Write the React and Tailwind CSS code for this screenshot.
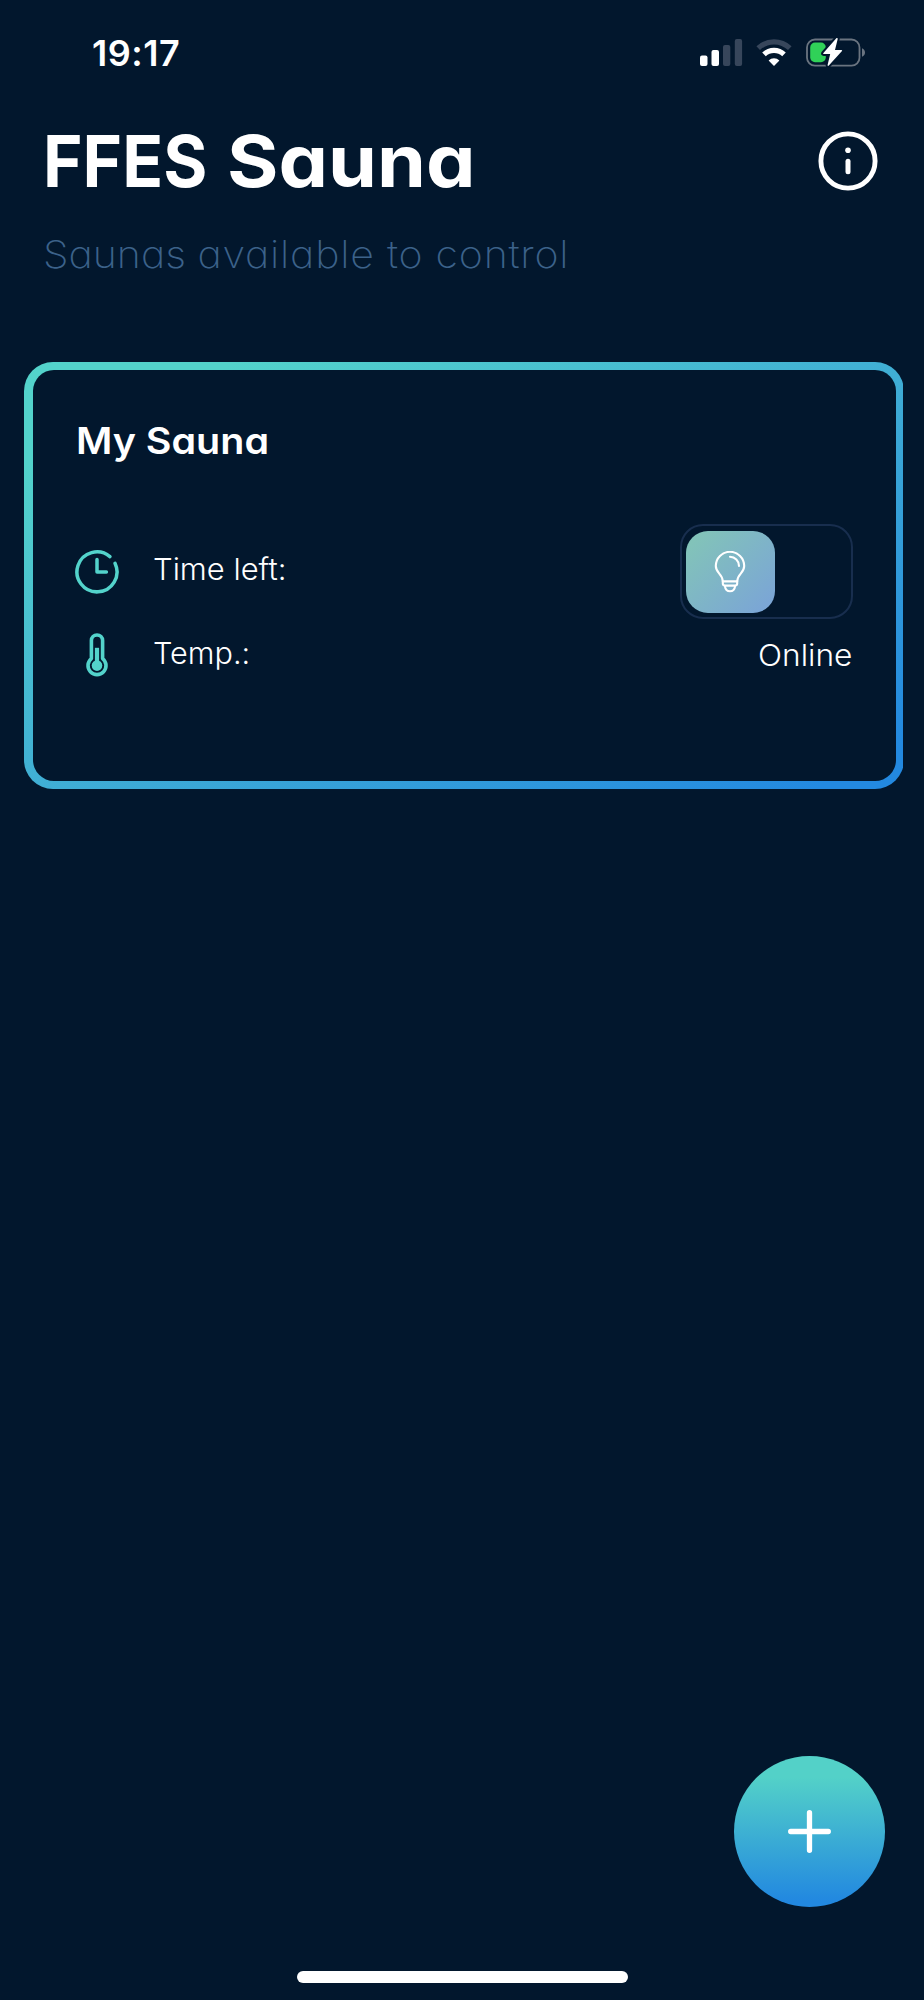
import React from "react";

function SignalIcon() {
  return (
    <svg width="43" height="28" viewBox="0 0 43 28">
      <rect x="0" y="16.5" width="7.5" height="10.5" rx="2" fill="#fff" />
      <rect x="11.5" y="11" width="7.5" height="16" rx="2" fill="#fff" />
      <rect x="23" y="6" width="7.3" height="21" rx="2" fill="#37465b" />
      <rect x="34.8" y="0" width="7.3" height="27" rx="2" fill="#37465b" />
    </svg>
  );
}

function WifiIcon() {
  return (
    <svg width="36" height="28" viewBox="0 0 36 28" fill="none">
      <path d="M2.2 9.2a23 23 0 0 1 31.6 0" stroke="#37465b" strokeWidth="5.2" />
      <path d="M8 15.4a14.6 14.6 0 0 1 20 0" stroke="#fff" strokeWidth="5.2" />
      <path d="M18 27L12.6 21.4a7.8 7.8 0 0 1 10.8 0z" fill="#fff" />
    </svg>
  );
}

function BatteryIcon() {
  const bolt = "M30.3 .2L17.2 15.2Q16.8 16 17.7 16H24.2L21.6 27Q21.7 28.4 22.8 27.6L36 13Q36.5 12 35.5 12H29L31.7 1Q31.5-.6 30.3 .2Z";
  return (
    <svg width="60" height="30" viewBox="0 0 60 30" fill="none">
      <rect x="1" y="1.5" width="52.5" height="26.2" rx="8" stroke="#6a7480" strokeWidth="1.8" />
      <path d="M56 10.2q3 1.4 3 4.4t-3 4.2z" fill="#6a7480" />
      <rect x="4.2" y="4.6" width="15.6" height="19.6" rx="4.8" fill="#30d158" />
      <path d={bolt} fill="#fff" stroke="#02172d" strokeWidth="4" />
      <path d={bolt} fill="#fff" />
    </svg>
  );
}

function InfoIcon() {
  return (
    <svg width="60" height="60" viewBox="0 0 60 60" fill="none">
      <circle cx="30" cy="30" r="27.1" stroke="#fff" strokeWidth="4.9" />
      <circle cx="30" cy="19.3" r="2.8" fill="#fff" />
      <path d="M30 30.2v10.6" stroke="#fff" strokeWidth="5" strokeLinecap="round" />
    </svg>
  );
}

function ClockIcon() {
  return (
    <svg width="44" height="44" viewBox="0 0 44 44" fill="none" stroke="#53d3cb" strokeWidth="3.5" strokeLinecap="round" strokeLinejoin="round">
      <path d="M34.9 6.6A20 20 0 1 0 40.1 13.4" />
      <path d="M22 9.4V22h9.4" />
    </svg>
  );
}

function ThermometerIcon() {
  return (
    <svg width="44" height="44" viewBox="0 0 44 44" fill="none">
      <path d="M16.4 7.6a5.6 5.6 0 0 1 11.2 0V25.6a9 9 0 1 1-11.2 0z" stroke="#53d3cb" strokeWidth="3.6" strokeLinejoin="round" />
      <path d="M22 14.8V32" stroke="#53d3cb" strokeWidth="4.2" />
      <circle cx="22" cy="32.6" r="5.3" fill="#53d3cb" />
    </svg>
  );
}

function BulbIcon() {
  return (
    <svg width="32" height="42" viewBox="0 0 32 42" fill="none" stroke="#fff" strokeWidth="2.1" strokeLinecap="round" strokeLinejoin="round">
      <path d="M8.8 30.4C8.8 22.8 1.8 22.4 1.8 15a14.2 14.2 0 0 1 28.4 0c0 7.4-7 7.8-7 15.4z" />
      <path d="M8.8 30.4v2.2q0 2 2 2h10.4q2 0 2-2v-2.2" />
      <path d="M10.8 34.8q.8 5.4 5.2 5.4t5.2-5.4" />
      <path d="M16 5.8a9.2 9.2 0 0 1 9 9.2" />
    </svg>
  );
}

function StatusBar() {
  return (
    <div className="flex h-[106px] items-start justify-between pl-[92px] pr-[58px] pt-[38px]">
      <div className="mt-[-3px] text-[36px] font-semibold leading-[36px] tracking-[0.5px]">19:17</div>
      <div className="flex items-start">
        <div className="mr-[13px] mt-px"><SignalIcon /></div>
        <div className="mr-[14px] mt-px"><WifiIcon /></div>
        <BatteryIcon />
      </div>
    </div>
  );
}

export default function App() {
  return (
    <div className="flex h-[2000px] w-[924px] flex-col overflow-hidden bg-[#02172d] font-['Inter',sans-serif] text-white [font-feature-settings:'cv11']">
      <StatusBar />
      <header className="h-[255.5px] pl-[43px] pr-[46.5px]">
        <div className="flex items-start justify-between">
          <h1 className="mt-[11px] whitespace-nowrap text-[72px] font-bold leading-[88px]">
            <span className="inline-block origin-left scale-x-[0.937]">FFES</span>{" "}
            <span className="-ml-[8.5px] inline-block origin-left scale-x-[1.092]">Sauna</span>
          </h1>
          <button className="mt-[25px]" aria-label="Info"><InfoIcon /></button>
        </div>
        <p className="mt-[26px] w-max origin-left scale-x-[1.08] whitespace-nowrap text-[38px] font-extralight leading-[46px] text-[#3c628a]">
          Saunas <span className="tracking-[0.72px]">available to control</span>
        </p>
      </header>

      <main className="w-[902.5px] overflow-hidden pl-6">
        <section className="h-[427.5px] w-[880px] rounded-[29px] bg-[linear-gradient(to_bottom_right,#53d3cb_12%,#3fadd5_52%,#2389e0_95%)] p-[8.5px]">
          <div className="h-full rounded-[21px] bg-[#02172d] pl-[42.5px] pr-[43px] pt-[48px]">
            <h2 className="ml-[0.5px] w-max origin-left scale-x-[1.066] whitespace-nowrap text-[37px] font-semibold leading-[46px]">My Sauna</h2>
            <div className="mt-[60px] flex items-center">
              <ClockIcon />
              <span className="mb-[5px] ml-[33.5px] origin-left scale-x-[1.03] whitespace-nowrap text-[30px] font-light leading-9">Time left:</span>
              <div className="ml-auto flex h-[95px] w-[173px] items-center rounded-[23px] border-2 border-[#182e4e] pl-1">
                <div className="flex h-[82px] w-[89px] items-center justify-center rounded-[22px] bg-[linear-gradient(135deg,#82c3b9_10%,#7ba6d5_90%)]">
                  <BulbIcon />
                </div>
              </div>
            </div>
            <div className="mt-[14px] flex items-center">
              <ThermometerIcon />
              <span className="mb-[4px] ml-[33.5px] origin-left scale-x-[1.02] whitespace-nowrap text-[30px] font-light leading-9">Temp.:</span>
              <span className="ml-auto mr-[0.5px] origin-right scale-x-[1.055] whitespace-nowrap text-[30px] font-light leading-9">Online</span>
            </div>
          </div>
        </section>
      </main>

      <footer className="mt-auto flex h-[244px] flex-col">
        <button className="ml-auto mr-[39px] flex size-[151px] items-center justify-center rounded-full bg-[linear-gradient(to_bottom,#53d1c8_14%,#2288e0_96%)]" aria-label="Add sauna">
          <svg width="44" height="44" viewBox="0 0 44 44" stroke="#fff" strokeWidth="5.3" strokeLinecap="round">
            <path d="M21.5 2.7v37.6M2.7 21.5h37.6" />
          </svg>
        </button>
        <div className="mx-auto mt-[64px] h-[11.5px] w-[331px] rounded-full bg-white" />
      </footer>
    </div>
  );
}
